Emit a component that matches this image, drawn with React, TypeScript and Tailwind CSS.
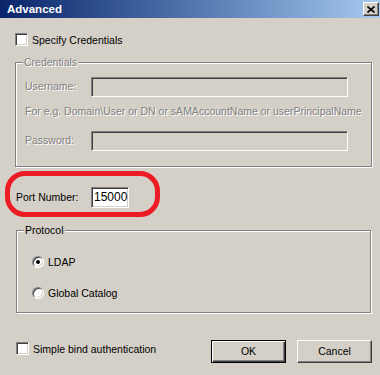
const sunken =
  "border border-t-[#808080] border-l-[#808080] border-b-white border-r-white shadow-[inset_1px_1px_0_#404040,inset_-1px_-1px_0_#d4d0c8]";
const grayText = "text-[#808080] [text-shadow:1px_1px_0_#fff]";

function Checkbox({ label }: { label: string }) {
  return (
    <div className="flex items-center gap-[4px] h-[13px]">
      <span className={`w-[13px] h-[13px] shrink-0 bg-white ${sunken}`} />
      <span className="leading-[14px] whitespace-nowrap">{label}</span>
    </div>
  );
}

function Radio({ label, checked }: { label: string; checked?: boolean }) {
  return (
    <div className="flex items-center gap-[4px] h-[13px]">
      <span
        className={`w-[12px] h-[12px] shrink-0 rounded-full bg-white flex items-center justify-center ${sunken}`}
      >
        {checked && <span className="w-[4px] h-[4px] rounded-full bg-black" />}
      </span>
      <span className="leading-[14px] whitespace-nowrap">{label}</span>
    </div>
  );
}

function GroupBox({
  label,
  disabled,
  className,
  children,
}: {
  label: string;
  disabled?: boolean;
  className: string;
  children: React.ReactNode;
}) {
  return (
    <div
      className={`relative border border-[#808080] shadow-[1px_1px_0_#fff,inset_1px_1px_0_#fff] ${className}`}
    >
      <span
        className={`absolute -top-[8px] left-[7px] px-[1px] bg-[#d4d0c8] leading-[14px] ${
          disabled ? grayText : ""
        }`}
      >
        {label}
      </span>
      {children}
    </div>
  );
}

export default function App() {
  return (
    <div className="w-[380px] h-[375px] overflow-hidden bg-[#d4d0c8] text-black text-[10.5px] font-['Liberation_Sans',Arial,sans-serif]">
      {/* Title bar */}
      <div className="h-[18px] flex items-center pl-[7px] bg-linear-to-r from-[#0a246a] to-[#a6caf0]">
        <span className="text-white font-bold text-[11.5px] leading-[14px]">Advanced</span>
        <button className="ml-auto mr-[1px] w-[16px] h-[14px] flex items-center justify-center bg-[#d4d0c8] border border-t-white border-l-white border-b-[#404040] border-r-[#404040] shadow-[inset_-1px_-1px_0_#808080]">
          <svg width="8" height="7" viewBox="0 0 8 7">
            <path d="M0.5 0.5 L7.5 6.5 M7.5 0.5 L0.5 6.5" stroke="#000" strokeWidth="1.6" />
          </svg>
        </button>
      </div>

      {/* Specify credentials */}
      <div className="mt-[15px] ml-[15px]">
        <Checkbox label="Specify Credentials" />
      </div>

      {/* Credentials group */}
      <GroupBox label="Credentials" disabled className="mt-[16px] ml-[15px] mr-[8px] h-[105px] pl-[9px]">
        <div className="flex items-center h-[20px] mt-[14px]">
          <span className={`w-[66px] ${grayText}`}>Username:</span>
          <span className={`w-[257px] h-[20px] bg-[#d4d0c8] ${sunken}`} />
        </div>
        <div className={`mt-[7px] leading-[14px] whitespace-nowrap ${grayText}`}>
          For e.g. Domain\User or DN or sAMAccountName or userPrincipalName
        </div>
        <div className="flex items-center h-[20px] mt-[13px]">
          <span className={`w-[66px] ${grayText}`}>Password:</span>
          <span className={`w-[257px] h-[20px] bg-[#d4d0c8] ${sunken}`} />
        </div>
      </GroupBox>

      {/* Port number, circled in red */}
      <div className="mt-[4px] ml-[5px] w-[155px] h-[46px] border-[5px] border-[#ed1c24] rounded-[20px] pt-[11px] pl-[6px]">
        <div className="flex items-center h-[21px]">
          <span className="w-[75px]">Port Number:</span>
          <span className={`w-[38px] h-[21px] bg-white px-[2px] text-[12px] leading-[19px] ${sunken}`}>
            15000
          </span>
        </div>
      </div>

      {/* Protocol group */}
      <GroupBox label="Protocol" className="mt-[13px] ml-[16px] mr-[9px] h-[83px] pl-[15px]">
        <div className="mt-[24px]">
          <Radio label="LDAP" checked />
        </div>
        <div className="mt-[18px]">
          <Radio label="Global Catalog" />
        </div>
      </GroupBox>

      {/* Bottom row */}
      <div className="mt-[27px] flex items-start pl-[16px] pr-[8px]">
        <div className="mt-[2px]">
          <Checkbox label="Simple bind authentication" />
        </div>
        <div className="ml-auto flex gap-[11px]">
          <button className="w-[75px] h-[23px] border border-black bg-[#d4d0c8] shadow-[inset_1px_1px_0_#fff,inset_-1px_-1px_0_#404040,inset_-2px_-2px_0_#808080]">
            OK
          </button>
          <button className="w-[75px] h-[23px] bg-[#d4d0c8] border border-t-white border-l-white border-b-[#404040] border-r-[#404040] shadow-[inset_-1px_-1px_0_#808080]">
            Cancel
          </button>
        </div>
      </div>
    </div>
  );
}
